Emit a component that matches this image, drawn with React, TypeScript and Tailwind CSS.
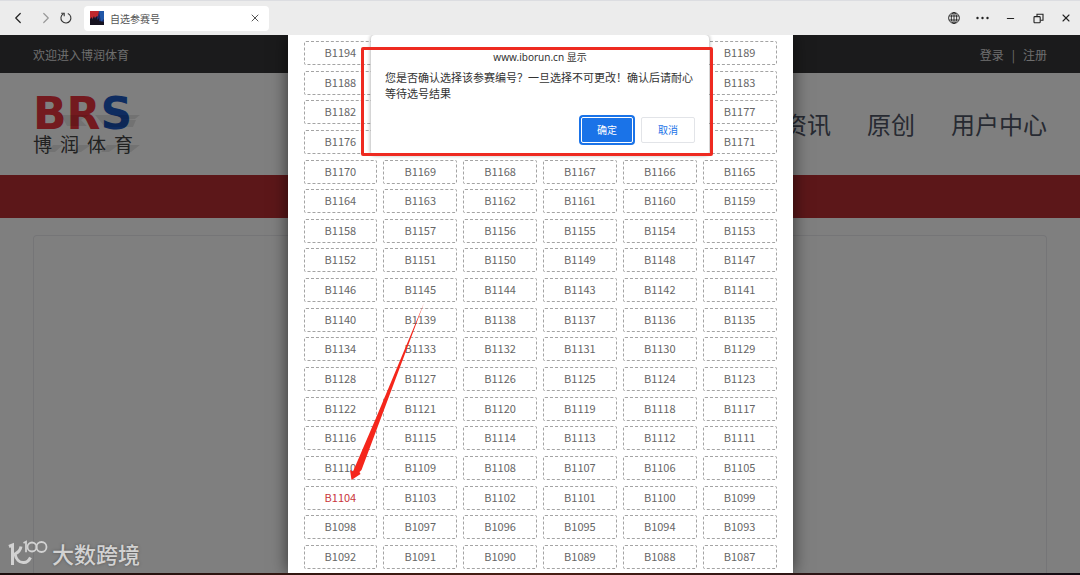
import { ChevronLeft, ChevronRight, X, Minus } from "lucide-react";
import { useState } from "react";

const TOTAL = 108;
const FIRST = 1194;
const numbers = Array.from({ length: TOTAL }, (_, i) => `B${FIRST - i}`);

const windowButton = "flex w-7 h-full items-center justify-center text-[#222]";

function GlobeIcon() {
  return (
    <svg width="12" height="12" viewBox="0 0 12 12" fill="none" stroke="currentColor" strokeWidth="0.9">
      <circle cx="6" cy="6" r="5.4" />
      <ellipse cx="6" cy="6" rx="2.7" ry="5.4" />
      <path d="M6 .6v10.8M1.2 4h9.6M1.2 8h9.6" />
    </svg>
  );
}

function ReloadIcon() {
  return (
    <svg width="12" height="12" viewBox="0 0 12 12" fill="none" stroke="currentColor" strokeWidth="1.1">
      <path d="M7.8 1.4A5 5 0 1 1 3.4 1.7" />
      <path d="M1.2 1.2h3v3" />
    </svg>
  );
}

function DotsIcon() {
  return (
    <svg width="13" height="4" viewBox="0 0 13 4" fill="currentColor">
      <circle cx="1.5" cy="2" r="1.2" />
      <circle cx="6.5" cy="2" r="1.2" />
      <circle cx="11.5" cy="2" r="1.2" />
    </svg>
  );
}

function RestoreIcon() {
  return (
    <svg width="11" height="11" viewBox="0 0 11 11" fill="none" stroke="currentColor" strokeWidth="1.1">
      <rect x="1" y="3.6" width="6.2" height="6.2" rx="0.8" />
      <path d="M4 3.4V1.2h6v6H7.4" />
    </svg>
  );
}

function Favicon() {
  return (
    <svg width="14" height="14" viewBox="0 0 14 14">
      <rect width="14" height="14" fill="#1d2c66" />
      <path d="M0 0h9L8 5 0 9z" fill="#c0282d" />
      <path d="M9 0h5v8l-3 3z" fill="#2157a8" />
      <path d="M0 8l2-2v3l2-4 1 3 2-3v4l2-2v3l5 1v3H0z" fill="#161320" />
    </svg>
  );
}

function Toolbar() {
  return (
    <div className="flex h-[35px] shrink-0 items-center border-t border-[#dcdde1] bg-[#ececec]">
      <button aria-label="后退" className="ml-2 flex w-5 justify-center text-[#222]">
        <ChevronLeft size={18} strokeWidth={1.6} />
      </button>
      <button aria-label="前进" className="ml-2 flex w-5 justify-center text-[#999]">
        <ChevronRight size={18} strokeWidth={1.6} />
      </button>
      <button aria-label="刷新" className="ml-0.5 flex w-4 justify-center text-[#333]">
        <ReloadIcon />
      </button>
      <div className="ml-2.5 flex h-[25px] w-[185px] items-center rounded-sm bg-white px-1.5">
        <Favicon />
        <span className="ml-1.5 flex-1 text-[10px] text-[#555]">自选参赛号</span>
        <button aria-label="关闭标签页" className="flex w-4 justify-center text-[#555]">
          <X size={12} strokeWidth={2} />
        </button>
      </div>
      <div className="ml-auto flex h-full">
        <button aria-label="语言" className={windowButton}>
          <GlobeIcon />
        </button>
        <button aria-label="更多" className={windowButton}>
          <DotsIcon />
        </button>
        <button aria-label="最小化" className={windowButton}>
          <Minus size={11} strokeWidth={2.2} />
        </button>
        <button aria-label="还原" className={windowButton}>
          <RestoreIcon />
        </button>
        <button aria-label="关闭" className={windowButton}>
          <X size={12} strokeWidth={2.2} />
        </button>
      </div>
    </div>
  );
}

function Logo() {
  return (
    <div className="relative mt-1.5 w-[100px]">
      <svg className="absolute top-0 left-0" width="112" height="64" viewBox="0 0 112 64" fill="#000" fillOpacity="0.1">
        <path d="M28 17h28l-8 5 6 6H34zM62 17h45l-5 4H84l19 1-3 7H72z" />
        <path d="M20 47h10l-8 7h-8zM46 47h12l-10 7h-8zM74 47h12l-10 7h-8zM96 47h11l-9 7h-7z" />
      </svg>
      <div className="font-['DejaVu_Sans'] text-[44px] leading-8 font-bold text-[#e8353e]">
        BR<span className="text-[#1c58c0]">S</span>
      </div>
      <div className="mt-0.5 flex justify-between text-[19px] leading-6 text-[#444]">
        <span>博</span>
        <span>润</span>
        <span>体</span>
        <span>育</span>
      </div>
    </div>
  );
}

function Site() {
  return (
    <div className="flex h-full flex-col bg-white">
      <div className="flex h-[38px] shrink-0 items-center justify-between bg-[#363639] px-[33px] pt-0.5 text-xs text-[#dcdcdc]">
        <span>欢迎进入博润体育</span>
        <div className="flex gap-2">
          <a href="#login">登录</a>
          <span>|</span>
          <a href="#register">注册</a>
        </div>
      </div>
      <div className="flex h-[102px] shrink-0 items-center justify-between px-[33px]">
        <Logo />
        <nav className="flex gap-9 text-2xl text-[#4e5464]">
          <a href="#news">资讯</a>
          <a href="#original">原创</a>
          <a href="#user">用户中心</a>
        </nav>
      </div>
      <div className="h-[43px] shrink-0 bg-[#b92e33]" />
      <div className="mx-[33px] mt-[17px] flex-1 rounded-t border border-b-0 border-[#eaeaee]" />
    </div>
  );
}

function NumberPicker() {
  const [selected, setSelected] = useState<string>("B1104");

  return (
    <div className="grid h-full w-[505px] grid-cols-6 content-between gap-x-1.5 bg-white px-4 pt-1.5 pb-1 shadow-[0_0_16px_rgba(0,0,0,0.6)]">
      {numbers.map((n) => (
        <button
          key={n}
          onClick={() => setSelected(n)}
          className={`h-6 rounded-xs border border-dashed border-[#a4a4a4] pb-0.5 text-[11px] leading-4 ${
            n === selected ? "text-[#c9353c]" : "text-[#666]"
          }`}
        >
          {n}
        </button>
      ))}
    </div>
  );
}

function ConfirmDialog() {
  return (
    <div
      role="alertdialog"
      aria-labelledby="dialog-title"
      className="flex w-[338px] flex-col rounded-sm bg-white px-3.5 pt-3.5 pb-3 text-[11px] leading-4 text-[#333] shadow-[0_0_4px_rgba(0,0,0,0.4)]"
    >
      <h2 id="dialog-title" className="text-center font-['Noto_Sans','Noto_Sans_CJK_SC',sans-serif] text-[10px]">
        www.iborun.cn 显示
      </h2>
      <p className="mt-1">您是否确认选择该参赛编号？一旦选择不可更改！确认后请耐心等待选号结果</p>
      <div className="mt-4 flex justify-end gap-2">
        <button className="h-[26px] w-[52px] rounded-xs border border-white bg-[#1a73e8] text-[10px] text-white ring-2 ring-[#1a73e8]">
          确定
        </button>
        <button className="h-[26px] w-[54px] rounded-xs border border-[#e2e4e8] text-[10px] text-[#1a73e8]">
          取消
        </button>
      </div>
    </div>
  );
}

function Watermark() {
  return (
    <div className="flex items-center gap-1 text-[22px] leading-7 font-medium text-[#d2d2d2] [text-shadow:0_0_3px_#555]">
      <svg width="40" height="28" viewBox="0 0 40 28" fill="none" stroke="currentColor" strokeWidth="3">
        <path d="M1 7.5L4.5 6v20" />
        <path d="M13 7.5C12.5 11 11 13 7 15c1 5 4 9 9 8.500 3 0 5-2 6.500-5" />
        <path d="M15.500 4l2.500-1.200v10.500" strokeWidth="1.8" />
        <circle cx="24" cy="8" r="4.5" strokeWidth="1.8" />
        <circle cx="33.500" cy="8" r="5" strokeWidth="1.8" />
      </svg>
      <span>大数跨境</span>
    </div>
  );
}

export default function App() {
  return (
    <div className="flex h-screen flex-col overflow-hidden font-['Noto_Sans_CJK_SC','Noto_Sans',sans-serif]">
      <Toolbar />
      <main className="relative min-h-0 flex-1 overflow-hidden">
        <Site />
        <div className="absolute inset-0 flex justify-center bg-black/50">
          <NumberPicker />
        </div>
        <div className="absolute inset-x-0 top-0 flex justify-center">
          <ConfirmDialog />
        </div>
        {/* marks drawn over the page */}
        <div className="pointer-events-none absolute inset-x-0 top-3 flex justify-center">
          <div className="mr-1.5 h-[109px] w-[352px] rounded-xs border-3 border-[#ee2a20]" />
        </div>
        <div className="pointer-events-none absolute inset-x-0 top-[267px] flex justify-center">
          <svg className="mr-[306px]" width="76" height="180" viewBox="0 0 76 180">
            <path d="M75 1L12.500 168l-2 2 1 2-9 6L1 168l3 1.500L27 116z" fill="#f5261b" />
          </svg>
        </div>
        <div className="absolute bottom-1.5 left-2">
          <Watermark />
        </div>
      </main>
      <div className="h-0.5 shrink-0 bg-gradient-to-r from-[#1a0d0c] via-[#4a2015] to-[#120a12]" />
    </div>
  );
}
